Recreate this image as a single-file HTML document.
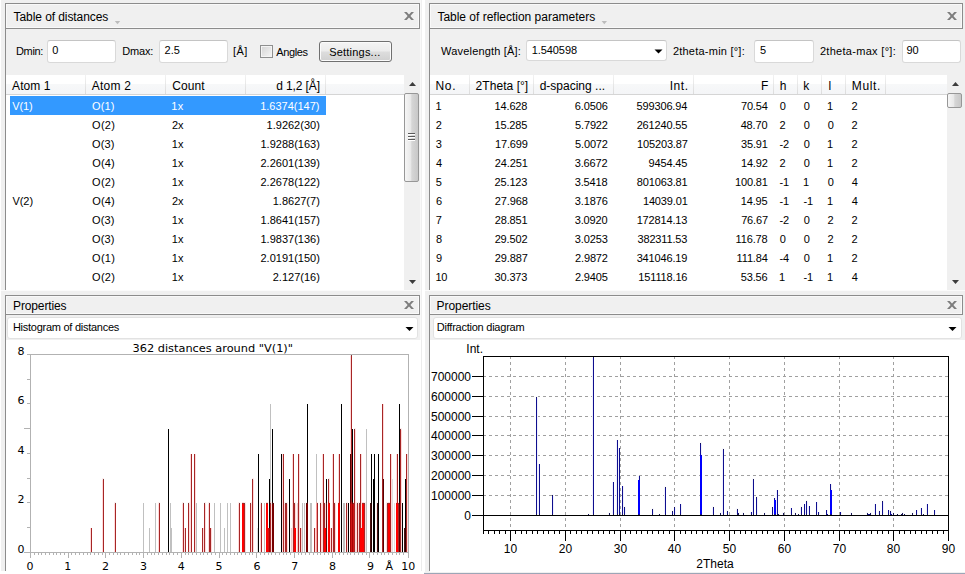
<!DOCTYPE html>
<html><head><meta charset="utf-8"><title>Distances and reflections</title>
<style>
html,body{margin:0;padding:0}
body{width:965px;height:574px;background:#f0f0f0;position:relative;overflow:hidden;font-family:"Liberation Sans",sans-serif}
.a{position:absolute;box-sizing:border-box}
.t{position:absolute;white-space:pre;}
.hd{border:1px solid #8c8c8c;background:#f0f0f0;box-shadow:inset 0 0 0 1px #f9f9f9}
.vb{background:#8c8c8c;width:1px}
.wh{background:#fff}
.inp{background:#fff;border:1px solid #d9d9d9;border-top-color:#c4c4c4;border-radius:3px}
.cmb{background:#fff;border:1px solid #e2e2e2;border-radius:3px}
.th{background:linear-gradient(#fff 0,#fff 45%,#f7f8f9 50%,#f4f5f7 100%);border-bottom:1px solid #d5d5d5}
.sep{width:1px;background:linear-gradient(#f2f2f2,#dcdcdc)}
.sbt{background:linear-gradient(90deg,#f6f6f6 0,#e8e8e8 45%,#d6d6d6 52%,#c8c8c8 100%);border:1px solid #979797;border-radius:2px}
.btn{border:1px solid #707070;border-radius:3px;background:linear-gradient(#f4f4f4 0,#ececec 48%,#dddddd 52%,#d0d0d0 100%);box-shadow:inset 0 0 0 1px #fbfbfb}
</style></head><body>
<div class="a wh" style="left:0px;top:0px;width:1px;height:574px;"></div>
<div class="a wh" style="left:0px;top:571px;width:424px;height:3px;"></div>
<div class="a " style="left:424px;top:572.6px;width:541px;height:1.4px;background:#9ca6b7"></div>
<div class="a wh" style="left:422px;top:0px;width:3px;height:572px;"></div>
<div class="a " style="left:420px;top:0px;width:1px;height:571px;background:#f9f9f9"></div>
<div class="a " style="left:1px;top:290px;width:420px;height:1px;background:#fbfbfb"></div>
<div class="a " style="left:425px;top:290px;width:540px;height:1px;background:#fbfbfb"></div>
<div class="a hd" style="left:5px;top:3px;width:415px;height:26px;"></div>
<div class="a vb" style="left:5px;top:28px;width:1px;height:262px;"></div>
<div class="a wh" style="left:6px;top:75px;width:398px;height:215px;"></div>
<div class="a th" style="left:6px;top:75px;width:398px;height:20px;"></div>
<div class="a sep" style="left:85px;top:75px;width:1px;height:19px;"></div>
<div class="a sep" style="left:165px;top:75px;width:1px;height:19px;"></div>
<div class="a sep" style="left:245px;top:75px;width:1px;height:19px;"></div>
<div class="a sep" style="left:325px;top:75px;width:1px;height:19px;"></div>
<div class="a " style="left:10px;top:96px;width:316px;height:19px;background:#3399ff"></div>
<div class="a " style="left:404px;top:75px;width:16px;height:215px;background:#f0f0f0"></div>
<div class="a sbt" style="left:404px;top:93px;width:15px;height:89px;"></div>
<div class="a hd" style="left:429px;top:3px;width:534px;height:26px;"></div>
<div class="a vb" style="left:429px;top:28px;width:1px;height:262px;"></div>
<div class="a wh" style="left:430px;top:75px;width:517px;height:215px;"></div>
<div class="a th" style="left:430px;top:75px;width:517px;height:20px;"></div>
<div class="a sep" style="left:469px;top:75px;width:1px;height:19px;"></div>
<div class="a sep" style="left:533px;top:75px;width:1px;height:19px;"></div>
<div class="a sep" style="left:613px;top:75px;width:1px;height:19px;"></div>
<div class="a sep" style="left:693px;top:75px;width:1px;height:19px;"></div>
<div class="a sep" style="left:773px;top:75px;width:1px;height:19px;"></div>
<div class="a sep" style="left:797px;top:75px;width:1px;height:19px;"></div>
<div class="a sep" style="left:821px;top:75px;width:1px;height:19px;"></div>
<div class="a sep" style="left:845px;top:75px;width:1px;height:19px;"></div>
<div class="a sep" style="left:885px;top:75px;width:1px;height:19px;"></div>
<div class="a " style="left:947px;top:75px;width:16px;height:215px;background:#f0f0f0"></div>
<div class="a sbt" style="left:947px;top:93px;width:15px;height:15px;"></div>
<div class="a hd" style="left:5px;top:295px;width:415px;height:20px;"></div>
<div class="a vb" style="left:5px;top:314px;width:1px;height:257px;"></div>
<div class="a wh" style="left:6px;top:340px;width:418px;height:231px;"></div>
<div class="a cmb" style="left:7px;top:316.5px;width:411px;height:22px;"></div>
<div class="a " style="left:421px;top:340px;width:1px;height:231px;background:#ececec"></div>
<div class="a hd" style="left:429px;top:295px;width:534px;height:20px;"></div>
<div class="a vb" style="left:429px;top:314px;width:1px;height:257px;"></div>
<div class="a wh" style="left:430px;top:340px;width:535px;height:232px;"></div>
<div class="a cmb" style="left:432.5px;top:316.5px;width:529px;height:22px;"></div>
<div class="a inp" style="left:47px;top:40px;width:68.5px;height:22.5px;"></div>
<div class="a inp" style="left:159px;top:40px;width:68.5px;height:22.5px;"></div>
<div class="a inp" style="left:525.5px;top:40px;width:141px;height:21px;"></div>
<div class="a inp" style="left:754px;top:40px;width:60px;height:22.5px;"></div>
<div class="a inp" style="left:901.5px;top:40px;width:59.5px;height:22.5px;"></div>
<div class="a " style="left:260px;top:45px;width:13px;height:13px;border:1px solid #8e8f8f;background:linear-gradient(135deg,#d4d4d4,#f6f6f6);box-shadow:inset 0 0 0 1px #f4f4f4"></div>
<div class="a btn" style="left:319px;top:41px;width:73px;height:21px;"></div>
<svg class="a" style="left:0;top:0" width="965" height="574" viewBox="0 0 965 574">
<g fill="#7e7e7e"><path d="M404 12h2.7l7.3 8h-2.7z"/><path d="M414 12h-2.7l-7.3 8h2.7z"/><path d="M947 12h2.7l7.3 8h-2.7z"/><path d="M957 12h-2.7l-7.3 8h2.7z"/><path d="M404 301h2.7l7.3 8h-2.7z"/><path d="M414 301h-2.7l-7.3 8h2.7z"/><path d="M947 301h2.7l7.3 8h-2.7z"/><path d="M957 301h-2.7l-7.3 8h2.7z"/></g>
<g fill="#bcbcbc"><path d="M114.8 21h5.4l-2.7 3.2z"/><path d="M601.6 21h5.4l-2.7 3.2z"/></g>
<g fill="#000"><path d="M405.5 327h8l-4 4z"/><path d="M948.5 327h8l-4 4z"/><path d="M654.5 49.5h8l-4 4z"/></g>
<g fill="#3c3c3c"><path d="M409 86h7l-3.5-4z"/><path d="M952 86h7l-3.5-4z"/><path d="M409 280h7l-3.5 4z"/><path d="M952 280h7l-3.5 4z"/></g>
<g stroke="#5a5a5a" stroke-width="1"><path d="M408 133.5h7M408 136.5h7M408 139.5h7"/><path stroke="#fff" d="M408 134.5h7M408 137.5h7M408 140.5h7"/></g>
</svg>
<svg class="a" style="left:0;top:0" width="965" height="574" viewBox="0 0 965 574" shape-rendering="crispEdges">
<path fill="#ffd9d9" d="M90 528h1v24h-1zM102 480h1v72h-1zM114 504h1v48h-1zM158 504h1v48h-1zM182 504h1v48h-1zM184 528h1v24h-1zM189 504h1v48h-1zM190 454h1v98h-1zM195 454h1v98h-1zM203 528h1v24h-1zM205 504h1v48h-1zM208 504h1v48h-1zM211 528h1v24h-1zM238 504h1v48h-1zM242 502h2v1h-2zM245 504h1v48h-1zM251 504h1v48h-1zM253 480h1v72h-1zM260 504h1v48h-1zM266 502h2v1h-2zM271 504h1v48h-1zM282 454h1v98h-1zM284 504h1v48h-1zM287 504h1v48h-1zM292 454h1v98h-1zM295 504h1v24h-1zM299 454h1v98h-1zM301 528h1v24h-1zM315 528h1v24h-1zM321 504h1v48h-1zM322 454h1v98h-1zM325 504h1v24h-1zM329 480h1v22h-1zM330 528h1v24h-1zM332 454h1v98h-1zM335 504h1v48h-1zM338 454h1v48h-1zM347 504h1v48h-1zM350 356h1v98h-1zM355 430h1v122h-1zM356 504h1v48h-1zM358 504h1v48h-1zM361 454h1v74h-1zM362 502h2v1h-2zM365 504h1v48h-1zM383 404h1v75h-1zM386 504h1v48h-1zM388 502h2v1h-2zM391 454h1v98h-1zM396 454h1v48h-1zM401 430h1v122h-1zM407 454h1v98h-1z"/>
<path fill="#a62626" d="M91 528h1v24h-1zM103 480h1v72h-1zM115 504h1v48h-1zM159 504h1v48h-1zM183 504h1v48h-1zM185 528h1v24h-1zM188 504h1v48h-1zM191 454h1v98h-1zM194 454h1v98h-1zM202 528h1v24h-1zM204 504h1v48h-1zM209 504h1v48h-1zM210 528h1v24h-1zM239 504h1v48h-1zM242 503h2v1h-2zM244 504h1v48h-1zM250 504h1v48h-1zM252 480h1v72h-1zM261 504h1v48h-1zM266 503h2v1h-2zM270 504h1v48h-1zM283 454h1v98h-1zM285 504h2v48h-2zM293 454h1v98h-1zM294 504h1v24h-1zM298 454h1v98h-1zM300 528h1v24h-1zM314 528h1v24h-1zM317 504h1v48h-1zM320 504h1v48h-1zM323 454h1v98h-1zM324 504h1v24h-1zM328 480h1v22h-1zM331 528h1v24h-1zM333 454h1v98h-1zM334 504h1v48h-1zM339 454h1v48h-1zM346 504h1v48h-1zM351 356h1v146h-1zM354 430h1v122h-1zM357 504h1v48h-1zM359 504h1v48h-1zM360 454h1v74h-1zM362 503h2v1h-2zM364 504h1v48h-1zM382 404h1v148h-1zM387 504h1v48h-1zM388 503h2v1h-2zM390 454h1v98h-1zM397 454h1v48h-1zM398 504h1v48h-1zM400 430h1v122h-1zM406 454h1v98h-1z"/>
<path fill="#ffecec" d="M102 478h1v2h-1zM103 478h1v1h-1zM114 502h1v2h-1zM115 502h1v1h-1zM158 502h1v2h-1zM159 502h1v1h-1zM182 502h1v2h-1zM183 502h1v1h-1zM188 502h1v1h-1zM189 502h1v2h-1zM204 502h1v1h-1zM205 502h1v2h-1zM208 502h1v2h-1zM209 502h1v1h-1zM238 502h1v2h-1zM239 502h1v1h-1zM244 502h1v1h-1zM245 502h1v2h-1zM250 502h1v1h-1zM251 502h1v2h-1zM252 478h1v1h-1zM253 478h1v2h-1zM260 502h1v2h-1zM261 502h1v1h-1zM271 502h1v2h-1zM284 502h1v2h-1zM285 502h2v1h-2zM287 502h1v2h-1zM294 502h1v1h-1zM295 502h1v2h-1zM317 502h1v1h-1zM320 502h1v1h-1zM321 502h1v2h-1zM324 502h1v1h-1zM325 502h1v2h-1zM328 478h1v1h-1zM329 478h1v2h-1zM334 502h1v1h-1zM335 502h1v2h-1zM346 502h1v1h-1zM347 502h1v2h-1zM350 354h1v2h-1zM351 354h1v1h-1zM354 428h1v1h-1zM355 428h1v2h-1zM356 502h1v2h-1zM357 502h1v1h-1zM358 502h1v2h-1zM359 502h1v1h-1zM364 502h1v1h-1zM365 502h1v2h-1zM386 502h1v2h-1zM387 502h1v1h-1zM398 502h1v1h-1zM400 428h1v1h-1zM401 428h1v2h-1z"/>
<path fill="#793939" d="M103 479h1v1h-1zM115 503h1v1h-1zM159 503h1v1h-1zM183 503h1v1h-1zM188 503h1v1h-1zM204 503h1v1h-1zM209 503h1v1h-1zM239 503h1v1h-1zM244 503h1v1h-1zM250 503h1v1h-1zM252 479h1v1h-1zM261 503h1v1h-1zM270 503h1v1h-1zM285 503h2v1h-2zM294 503h1v1h-1zM317 503h1v1h-1zM320 503h1v1h-1zM324 503h1v1h-1zM328 479h1v1h-1zM334 503h1v1h-1zM346 503h1v1h-1zM351 355h1v1h-1zM354 429h1v1h-1zM357 503h1v1h-1zM359 503h1v1h-1zM364 503h1v1h-1zM387 503h1v1h-1zM398 503h1v1h-1zM400 429h1v1h-1z"/>
<path fill="#c0c0c0" d="M143 503h1v49h-1zM149 528h1v24h-1zM155 503h1v49h-1zM170 503h1v49h-1zM171 528h1v24h-1zM196 503h1v49h-1zM214 503h1v49h-1zM220 503h1v49h-1zM224 528h1v24h-1zM227 503h1v49h-1zM230 503h1v49h-1zM264 503h1v49h-1zM270 404h1v98h-1zM302 503h1v49h-1zM304 503h1v49h-1zM310 503h2v49h-2zM316 454h1v48h-1zM343 503h2v49h-2zM366 429h1v123h-1z"/>
<path fill="#000000" d="M168 429h1v123h-1zM258 454h1v98h-1zM269 479h1v49h-1zM272 429h1v73h-1zM281 454h1v98h-1zM289 479h1v73h-1zM307 404h1v98h-1zM326 479h1v23h-1zM341 404h1v148h-1zM348 503h1v49h-1zM352 429h1v73h-1zM371 454h1v48h-1zM373 479h1v73h-1zM374 454h1v98h-1zM378 454h1v98h-1zM399 404h1v98h-1zM402 503h1v49h-1zM405 479h1v49h-1z"/>
<path fill="#ff0000" d="M242 504h2v48h-2zM266 504h2v48h-2zM294 528h2v24h-2zM324 528h2v24h-2zM328 504h2v48h-2zM338 504h2v48h-2zM360 528h2v24h-2zM362 504h2v48h-2zM388 504h2v48h-2zM396 504h2v48h-2z"/>
<path fill="#e0e0e0" d="M257 528h1v24h-1zM392 479h1v73h-1zM394 503h1v49h-1z"/>
<path fill="#d01414" d="M268 528h1v24h-1zM351 504h1v48h-1zM353 504h1v48h-1z"/>
<path fill="#a70000" d="M269 528h1v24h-1zM350 504h1v48h-1zM352 504h1v48h-1z"/>
<path fill="#edadad" d="M270 502h1v1h-1zM316 502h1v2h-1z"/>
<path fill="#2a0000" d="M272 502h1v1h-1zM307 502h1v1h-1zM371 504h1v48h-1zM405 528h1v24h-1z"/>
<path fill="#4e1212" d="M272 503h2v1h-2zM306 503h2v1h-2zM326 504h1v48h-1zM370 504h1v48h-1zM377 504h1v48h-1zM404 528h1v24h-1z"/>
<path fill="#780000" d="M272 504h2v48h-2zM306 504h2v48h-2z"/>
<path fill="#ffeded" d="M273 502h1v1h-1zM306 502h1v1h-1zM327 504h1v48h-1zM376 504h1v48h-1z"/>
<path fill="#fff6f6" d="M290 528h1v24h-1zM296 504h1v48h-1zM327 502h1v2h-1zM370 502h1v1h-1zM376 502h1v2h-1zM377 502h1v1h-1z"/>
<path fill="#eacdcd" d="M291 528h1v24h-1zM297 504h1v48h-1z"/>
<path fill="#e0d1d1" d="M297 503h1v1h-1z"/>
<path fill="#ff9a9a" d="M316 504h1v48h-1z"/>
<path fill="#150000" d="M326 502h1v1h-1zM371 502h1v2h-1z"/>
<path fill="#391b1b" d="M326 503h1v1h-1zM370 503h1v1h-1zM377 503h1v1h-1z"/>
<path fill="#d21313" d="M328 502h1v2h-1zM329 503h1v1h-1zM338 503h1v1h-1zM339 502h1v2h-1zM396 503h1v1h-1zM397 502h1v2h-1z"/>
<path fill="#ffc6c6" d="M329 502h1v1h-1zM338 502h1v1h-1zM396 502h1v1h-1z"/>
<path fill="#590000" d="M350 454h1v48h-1zM383 479h1v73h-1zM399 504h1v48h-1z"/>
<path fill="#6e0000" d="M350 502h1v1h-1z"/>
<path fill="#920000" d="M350 503h1v1h-1z"/>
<path fill="#bb1d1d" d="M351 502h1v2h-1z"/>
<path fill="#420000" d="M352 502h1v1h-1z"/>
<path fill="#660808" d="M352 503h1v1h-1z"/>
<path fill="#ffe3e3" d="M353 502h1v1h-1z"/>
<path fill="#8e3030" d="M353 503h1v1h-1z"/>
<path fill="#2d0000" d="M399 502h1v2h-1z"/>
<path fill="#b2b2b2" d="M30 354h379v1h-379zM408 354h1v204h-1zM30 354h1v204h-1zM24 552h385v1h-385zM27 527h3v1h-3zM27 502h3v1h-3zM27 478h3v1h-3zM27 453h3v1h-3zM24 428h6v1h-6zM27 403h3v1h-3zM27 379h3v1h-3zM27 354h3v1h-3zM34 553h1v2h-1zM38 553h1v2h-1zM41 553h1v2h-1zM45 553h1v2h-1zM49 553h1v2h-1zM53 553h1v2h-1zM56 553h1v2h-1zM60 553h1v2h-1zM64 553h1v2h-1zM68 553h1v5h-1zM71 553h1v2h-1zM75 553h1v2h-1zM79 553h1v2h-1zM83 553h1v2h-1zM87 553h1v2h-1zM90 553h1v2h-1zM94 553h1v2h-1zM98 553h1v2h-1zM102 553h1v2h-1zM105 553h1v5h-1zM109 553h1v2h-1zM113 553h1v2h-1zM117 553h1v2h-1zM120 553h1v2h-1zM124 553h1v2h-1zM128 553h1v2h-1zM132 553h1v2h-1zM136 553h1v2h-1zM139 553h1v2h-1zM143 553h1v5h-1zM147 553h1v2h-1zM151 553h1v2h-1zM154 553h1v2h-1zM158 553h1v2h-1zM162 553h1v2h-1zM166 553h1v2h-1zM169 553h1v2h-1zM173 553h1v2h-1zM177 553h1v2h-1zM181 553h1v5h-1zM185 553h1v2h-1zM188 553h1v2h-1zM192 553h1v2h-1zM196 553h1v2h-1zM200 553h1v2h-1zM203 553h1v2h-1zM207 553h1v2h-1zM211 553h1v2h-1zM215 553h1v2h-1zM219 553h1v5h-1zM222 553h1v2h-1zM226 553h1v2h-1zM230 553h1v2h-1zM234 553h1v2h-1zM237 553h1v2h-1zM241 553h1v2h-1zM245 553h1v2h-1zM249 553h1v2h-1zM252 553h1v2h-1zM256 553h1v5h-1zM260 553h1v2h-1zM264 553h1v2h-1zM268 553h1v2h-1zM271 553h1v2h-1zM275 553h1v2h-1zM279 553h1v2h-1zM283 553h1v2h-1zM286 553h1v2h-1zM290 553h1v2h-1zM294 553h1v5h-1zM298 553h1v2h-1zM301 553h1v2h-1zM305 553h1v2h-1zM309 553h1v2h-1zM313 553h1v2h-1zM317 553h1v2h-1zM320 553h1v2h-1zM324 553h1v2h-1zM328 553h1v2h-1zM332 553h1v5h-1zM335 553h1v2h-1zM339 553h1v2h-1zM343 553h1v2h-1zM347 553h1v2h-1zM350 553h1v2h-1zM354 553h1v2h-1zM358 553h1v2h-1zM362 553h1v2h-1zM366 553h1v2h-1zM369 553h1v5h-1zM373 553h1v2h-1zM377 553h1v2h-1zM381 553h1v2h-1zM384 553h1v2h-1zM388 553h1v2h-1zM392 553h1v2h-1zM396 553h1v2h-1zM399 553h1v2h-1zM403 553h1v2h-1z"/>
</svg>
<svg class="a" style="left:0;top:0" width="965" height="574" viewBox="0 0 965 574"><g font-family='"DejaVu Sans","Liberation Sans",sans-serif' font-size="11" fill="#000">
<text x="24.4" y="552.6" text-anchor="end">0</text>
<text x="24.4" y="502.6" text-anchor="end">2</text>
<text x="24.4" y="453.6" text-anchor="end">4</text>
<text x="24.4" y="403.6" text-anchor="end">6</text>
<text x="24.4" y="354.6" text-anchor="end">8</text>
<text x="29.9" y="569.5" text-anchor="middle">0</text>
<text x="67.7" y="569.5" text-anchor="middle">1</text>
<text x="105.6" y="569.5" text-anchor="middle">2</text>
<text x="143.4" y="569.5" text-anchor="middle">3</text>
<text x="181.2" y="569.5" text-anchor="middle">4</text>
<text x="219.0" y="569.5" text-anchor="middle">5</text>
<text x="256.9" y="569.5" text-anchor="middle">6</text>
<text x="294.7" y="569.5" text-anchor="middle">7</text>
<text x="332.5" y="569.5" text-anchor="middle">8</text>
<text x="370.4" y="569.5" text-anchor="middle">9</text>
<text x="408.2" y="569.5" text-anchor="middle">10</text>
<text x="389.3" y="569.5" text-anchor="middle">Å</text>
<text x="132.5" y="351.5" textLength="160.5" lengthAdjust="spacingAndGlyphs">362 distances around "V(1)"</text>
</g></svg>
<svg class="a" style="left:0;top:0" width="965" height="574" viewBox="0 0 965 574" shape-rendering="crispEdges">
<path d="M510.5 356V530M565.5 356V530M620.5 356V530M674.5 356V530M729.5 356V530M784.5 356V530M839.5 356V530M893.5 356V530M483 495.5H948M483 475.5H948M483 455.5H948M483 435.5H948M483 416.5H948M483 396.5H948M483 376.5H948" stroke="#a0a0a0" stroke-width="1" stroke-dasharray="3 3" fill="none"/>
<path fill="#f8f8ff" d="M536 396h1v1h-1zM537 396h1v2h-1zM537 514h2v1h-2zM552 494h1v1h-1zM553 494h1v2h-1zM553 514h1v1h-1zM589 514h1v1h-1zM592 357h1v1h-1zM592 514h1v1h-1zM608 512h1v3h-1zM609 512h1v1h-1zM612 514h1v1h-1zM616 514h1v1h-1zM618 514h1v1h-1zM623 514h1v1h-1zM624 506h1v1h-1zM625 506h1v2h-1zM625 514h1v1h-1zM652 508h1v1h-1zM653 508h1v2h-1zM653 514h1v1h-1zM658 514h1v1h-1zM664 486h1v2h-1zM664 514h1v1h-1zM665 486h1v1h-1zM672 510h1v1h-1zM673 510h1v2h-1zM673 514h1v1h-1zM674 506h1v1h-1zM675 506h1v2h-1zM675 514h1v1h-1zM681 514h1v1h-1zM700 442h1v1h-1zM701 442h1v2h-1zM712 506h1v2h-1zM712 514h1v1h-1zM713 506h1v1h-1zM720 512h1v1h-1zM721 512h1v3h-1zM722 448h1v2h-1zM722 514h1v1h-1zM723 448h1v1h-1zM726 510h1v2h-1zM726 514h1v1h-1zM727 510h1v1h-1zM736 508h1v2h-1zM736 514h1v1h-1zM737 508h1v1h-1zM738 512h1v1h-1zM739 512h1v3h-1zM742 512h1v3h-1zM743 512h1v1h-1zM750 514h1v1h-1zM752 478h1v2h-1zM752 514h1v1h-1zM753 478h1v1h-1zM756 496h1v1h-1zM757 496h1v2h-1zM757 514h1v1h-1zM764 512h1v1h-1zM765 512h1v3h-1zM772 506h1v1h-1zM773 506h1v2h-1zM773 514h1v1h-1zM776 514h1v1h-1zM779 514h1v1h-1zM782 512h1v3h-1zM783 512h1v1h-1zM790 514h1v1h-1zM794 512h1v3h-1zM795 512h1v1h-1zM799 514h2v1h-2zM800 506h1v2h-1zM801 506h1v1h-1zM805 514h1v1h-1zM806 500h1v1h-1zM807 500h1v2h-1zM807 514h2v1h-2zM817 514h1v1h-1zM819 514h1v1h-1zM841 514h1v1h-1zM850 512h1v3h-1zM851 512h1v1h-1zM866 512h1v3h-1zM867 512h1v1h-1zM870 512h1v1h-1zM871 512h1v3h-1zM874 514h1v1h-1zM878 510h1v2h-1zM878 514h1v1h-1zM879 510h1v1h-1zM882 500h1v1h-1zM883 500h1v2h-1zM883 514h1v1h-1zM889 514h1v1h-1zM890 510h1v1h-1zM891 510h1v2h-1zM892 512h1v3h-1zM893 512h1v1h-1zM896 514h1v1h-1zM900 514h1v1h-1zM902 512h1v1h-1zM903 512h1v3h-1zM905 514h1v1h-1zM912 512h1v1h-1zM913 512h1v3h-1zM917 514h1v1h-1zM920 514h1v1h-1zM922 514h1v1h-1zM926 514h1v1h-1zM935 514h1v1h-1z"/>
<path fill="#161656" d="M536 397h1v1h-1zM536 514h1v1h-1zM539 514h1v1h-1zM552 495h1v1h-1zM552 514h1v1h-1zM588 514h1v1h-1zM593 357h1v1h-1zM593 514h1v1h-1zM609 513h1v2h-1zM613 514h1v1h-1zM617 514h1v1h-1zM619 514h1v1h-1zM622 514h1v1h-1zM624 507h1v1h-1zM624 514h1v1h-1zM652 509h1v1h-1zM652 514h1v1h-1zM659 514h1v1h-1zM665 487h1v1h-1zM665 514h1v1h-1zM672 511h1v1h-1zM672 514h1v1h-1zM674 507h1v1h-1zM674 514h1v1h-1zM680 514h1v1h-1zM700 443h1v1h-1zM713 507h1v1h-1zM713 514h1v1h-1zM720 513h1v2h-1zM723 449h1v1h-1zM723 514h1v1h-1zM727 511h1v1h-1zM727 514h1v1h-1zM737 509h1v1h-1zM737 514h1v1h-1zM738 513h1v2h-1zM743 513h1v2h-1zM751 514h1v1h-1zM753 479h1v1h-1zM753 514h1v1h-1zM756 497h1v1h-1zM756 514h1v1h-1zM764 513h1v2h-1zM772 507h1v1h-1zM772 514h1v1h-1zM777 514h2v1h-2zM783 513h1v2h-1zM791 514h1v1h-1zM795 513h1v2h-1zM798 514h1v1h-1zM801 507h1v1h-1zM801 514h1v1h-1zM804 514h1v1h-1zM806 501h1v1h-1zM806 514h1v1h-1zM809 514h1v1h-1zM816 514h1v1h-1zM818 514h1v1h-1zM840 514h1v1h-1zM851 513h1v2h-1zM867 513h1v2h-1zM870 513h1v2h-1zM875 514h1v1h-1zM879 511h1v1h-1zM879 514h1v1h-1zM882 501h1v1h-1zM882 514h1v1h-1zM888 514h1v1h-1zM890 511h1v1h-1zM893 513h1v2h-1zM897 514h1v1h-1zM901 514h1v1h-1zM902 513h1v2h-1zM904 514h1v1h-1zM912 513h1v2h-1zM916 514h1v1h-1zM921 514h1v1h-1zM923 514h1v1h-1zM927 514h1v1h-1zM934 514h1v1h-1z"/>
<path fill="#0f0f8e" d="M536 398h1v116h-1zM539 464h1v50h-1zM552 496h1v18h-1zM593 358h1v156h-1zM613 482h1v32h-1zM617 440h1v74h-1zM619 448h1v66h-1zM622 486h1v28h-1zM624 508h1v6h-1zM638 514h2v1h-2zM639 476h1v4h-1zM652 510h1v4h-1zM665 488h1v26h-1zM672 512h1v2h-1zM674 508h1v6h-1zM680 504h1v10h-1zM700 444h1v10h-1zM700 514h2v1h-2zM713 508h1v6h-1zM723 450h1v64h-1zM727 512h1v2h-1zM737 510h1v4h-1zM751 512h1v2h-1zM753 480h1v34h-1zM756 498h1v16h-1zM772 508h1v6h-1zM774 498h1v2h-1zM774 514h2v1h-2zM777 490h1v24h-1zM791 508h1v6h-1zM801 508h1v6h-1zM804 504h1v10h-1zM806 502h1v12h-1zM809 506h1v8h-1zM816 502h1v12h-1zM818 512h1v2h-1zM826 510h1v5h-1zM827 514h1v1h-1zM830 484h1v6h-1zM830 514h2v1h-2zM840 512h1v2h-1zM868 514h2v1h-2zM875 504h1v10h-1zM879 512h1v2h-1zM882 502h1v12h-1zM888 510h1v4h-1zM890 512h1v3h-1zM891 514h1v1h-1zM916 510h1v4h-1zM921 508h1v6h-1zM927 504h1v10h-1zM934 510h1v4h-1z"/>
<path fill="#f0f0ff" d="M537 398h1v116h-1zM538 464h1v50h-1zM553 496h1v18h-1zM592 358h1v156h-1zM612 482h1v32h-1zM616 440h1v74h-1zM618 448h1v66h-1zM623 486h1v28h-1zM625 508h1v6h-1zM638 476h1v4h-1zM653 510h1v4h-1zM664 488h1v26h-1zM673 512h1v2h-1zM675 508h1v6h-1zM681 504h1v10h-1zM701 444h1v10h-1zM712 508h1v6h-1zM722 450h1v64h-1zM726 512h1v2h-1zM736 510h1v4h-1zM750 512h1v2h-1zM752 480h1v34h-1zM757 498h1v16h-1zM773 508h1v6h-1zM775 498h1v2h-1zM776 490h1v24h-1zM790 508h1v6h-1zM800 508h1v6h-1zM805 504h1v10h-1zM807 502h1v12h-1zM808 506h1v8h-1zM817 502h1v12h-1zM819 512h1v2h-1zM827 510h1v4h-1zM831 484h1v6h-1zM841 512h1v2h-1zM874 504h1v10h-1zM878 512h1v2h-1zM883 502h1v12h-1zM889 510h1v4h-1zM891 512h1v2h-1zM917 510h1v4h-1zM920 508h1v6h-1zM926 504h1v10h-1zM935 510h1v4h-1z"/>
<path fill="#0000ff" d="M638 480h2v34h-2zM700 456h2v58h-2zM774 500h2v14h-2zM830 490h2v24h-2z"/>
<path fill="#0707c7" d="M700 454h1v2h-1zM701 455h1v1h-1z"/>
<path fill="#e9e9ff" d="M701 454h1v1h-1z"/>
<path fill="#000" d="M483 356h466v1h-466zM483 356h1v175h-1zM948 356h1v175h-1zM483 530h466v1h-466zM472 515h477v1h-477zM472 495h11v1h-11zM472 475h11v1h-11zM472 455h11v1h-11zM472 435h11v1h-11zM472 416h11v1h-11zM472 396h11v1h-11zM472 376h11v1h-11zM483 531h1v3h-1zM488 531h1v3h-1zM494 531h1v3h-1zM499 531h1v3h-1zM505 531h1v3h-1zM510 531h1v10h-1zM515 531h1v3h-1zM521 531h1v3h-1zM526 531h1v3h-1zM532 531h1v3h-1zM537 531h1v3h-1zM543 531h1v3h-1zM548 531h1v3h-1zM554 531h1v3h-1zM559 531h1v3h-1zM565 531h1v10h-1zM570 531h1v3h-1zM576 531h1v3h-1zM581 531h1v3h-1zM587 531h1v3h-1zM592 531h1v3h-1zM598 531h1v3h-1zM603 531h1v3h-1zM609 531h1v3h-1zM614 531h1v3h-1zM620 531h1v10h-1zM625 531h1v3h-1zM630 531h1v3h-1zM636 531h1v3h-1zM641 531h1v3h-1zM647 531h1v3h-1zM652 531h1v3h-1zM658 531h1v3h-1zM663 531h1v3h-1zM669 531h1v3h-1zM674 531h1v10h-1zM680 531h1v3h-1zM685 531h1v3h-1zM691 531h1v3h-1zM696 531h1v3h-1zM702 531h1v3h-1zM707 531h1v3h-1zM713 531h1v3h-1zM718 531h1v3h-1zM724 531h1v3h-1zM729 531h1v10h-1zM734 531h1v3h-1zM740 531h1v3h-1zM745 531h1v3h-1zM751 531h1v3h-1zM756 531h1v3h-1zM762 531h1v3h-1zM767 531h1v3h-1zM773 531h1v3h-1zM778 531h1v3h-1zM784 531h1v10h-1zM789 531h1v3h-1zM795 531h1v3h-1zM800 531h1v3h-1zM806 531h1v3h-1zM811 531h1v3h-1zM817 531h1v3h-1zM822 531h1v3h-1zM828 531h1v3h-1zM833 531h1v3h-1zM839 531h1v10h-1zM844 531h1v3h-1zM849 531h1v3h-1zM855 531h1v3h-1zM860 531h1v3h-1zM866 531h1v3h-1zM871 531h1v3h-1zM877 531h1v3h-1zM882 531h1v3h-1zM888 531h1v3h-1zM893 531h1v10h-1zM899 531h1v3h-1zM904 531h1v3h-1zM910 531h1v3h-1zM915 531h1v3h-1zM921 531h1v3h-1zM926 531h1v3h-1zM932 531h1v3h-1zM937 531h1v3h-1zM943 531h1v3h-1zM948 531h1v10h-1z"/>
</svg>
<svg class="a" style="left:0;top:0" width="965" height="574" viewBox="0 0 965 574"><g font-family='"Liberation Sans",sans-serif' font-size="12" fill="#000">
<text x="471" y="519.8" text-anchor="end">0</text>
<text x="471" y="499.8" text-anchor="end">100000</text>
<text x="471" y="479.8" text-anchor="end">200000</text>
<text x="471" y="459.8" text-anchor="end">300000</text>
<text x="471" y="439.8" text-anchor="end">400000</text>
<text x="471" y="420.8" text-anchor="end">500000</text>
<text x="471" y="400.8" text-anchor="end">600000</text>
<text x="471" y="380.8" text-anchor="end">700000</text>
<text x="510.4" y="552.8" text-anchor="middle">10</text>
<text x="565.4" y="552.8" text-anchor="middle">20</text>
<text x="620.4" y="552.8" text-anchor="middle">30</text>
<text x="674.4" y="552.8" text-anchor="middle">40</text>
<text x="729.4" y="552.8" text-anchor="middle">50</text>
<text x="784.4" y="552.8" text-anchor="middle">60</text>
<text x="839.4" y="552.8" text-anchor="middle">70</text>
<text x="893.4" y="552.8" text-anchor="middle">80</text>
<text x="948.4" y="552.8" text-anchor="middle">90</text>
<text x="715" y="568" text-anchor="middle">2Theta</text>
<text x="483" y="353" text-anchor="end">Int.</text>
</g></svg>
<span class="t" id="t0" style="font:12px/16px 'Liberation Sans',sans-serif;color:#000;top:8.8px;letter-spacing:-0.08px;left:13.6px;">Table of distances</span>
<span class="t" id="t1" style="font:12px/16px 'Liberation Sans',sans-serif;color:#000;top:8.8px;letter-spacing:-0.01px;left:437.4px;">Table of reflection parameters</span>
<span class="t" id="t2" style="font:12px/16px 'Liberation Sans',sans-serif;color:#000;top:298.1px;letter-spacing:-0.12px;left:13.0px;">Properties</span>
<span class="t" id="t3" style="font:12px/16px 'Liberation Sans',sans-serif;color:#000;top:298.1px;letter-spacing:-0.05px;left:436.5px;">Properties</span>
<span class="t" id="t4" style="font:11px/16px 'Liberation Sans',sans-serif;color:#000;top:43.0px;letter-spacing:-0.36px;left:16.0px;">Dmin:</span>
<span class="t" id="t5" style="font:11px/16px 'Liberation Sans',sans-serif;color:#000;top:42.2px;left:52.3px;">0</span>
<span class="t" id="t6" style="font:11px/16px 'Liberation Sans',sans-serif;color:#000;top:43.0px;letter-spacing:-0.16px;left:122.2px;">Dmax:</span>
<span class="t" id="t7" style="font:11px/16px 'Liberation Sans',sans-serif;color:#000;top:42.2px;left:164.6px;">2.5</span>
<span class="t" id="t8" style="font:11px/16px 'Liberation Sans',sans-serif;color:#000;top:43.0px;letter-spacing:0.39px;left:233.1px;">[Å]</span>
<span class="t" id="t9" style="font:11px/16px 'Liberation Sans',sans-serif;color:#000;top:44.1px;letter-spacing:-0.41px;left:276.3px;">Angles</span>
<span class="t" id="t10" style="font:11px/16px 'Liberation Sans',sans-serif;color:#000;top:44.1px;letter-spacing:0.21px;left:329.2px;">Settings...</span>
<span class="t" id="t11" style="font:11px/16px 'Liberation Sans',sans-serif;color:#000;top:43.0px;letter-spacing:0.18px;left:441.1px;">Wavelength [Å]:</span>
<span class="t" id="t12" style="font:11px/16px 'Liberation Sans',sans-serif;color:#000;top:42.2px;letter-spacing:-0.07px;left:531.7px;">1.540598</span>
<span class="t" id="t13" style="font:11px/16px 'Liberation Sans',sans-serif;color:#000;top:43.0px;letter-spacing:0.23px;left:672.9px;">2theta-min [°]:</span>
<span class="t" id="t14" style="font:11px/16px 'Liberation Sans',sans-serif;color:#000;top:42.2px;left:760.1px;">5</span>
<span class="t" id="t15" style="font:11px/16px 'Liberation Sans',sans-serif;color:#000;top:43.0px;letter-spacing:0.30px;left:819.9px;">2theta-max [°]:</span>
<span class="t" id="t16" style="font:11px/16px 'Liberation Sans',sans-serif;color:#000;top:42.2px;left:906.5px;">90</span>
<span class="t" id="t17" style="font:11px/16px 'Liberation Sans',sans-serif;color:#000;top:318.9px;letter-spacing:-0.26px;left:12.9px;">Histogram of distances</span>
<span class="t" id="t18" style="font:11px/16px 'Liberation Sans',sans-serif;color:#000;top:318.9px;letter-spacing:-0.24px;left:436.8px;">Diffraction diagram</span>
<span class="t" id="t19" style="font:12px/16px 'Liberation Sans',sans-serif;color:#000;top:78.1px;letter-spacing:0.08px;left:12.1px;">Atom 1</span>
<span class="t" id="t20" style="font:12px/16px 'Liberation Sans',sans-serif;color:#000;top:78.1px;letter-spacing:0.24px;left:91.8px;">Atom 2</span>
<span class="t" id="t21" style="font:12px/16px 'Liberation Sans',sans-serif;color:#000;top:78.1px;letter-spacing:0.08px;left:172.2px;">Count</span>
<span class="t" id="t22" style="font:12px/16px 'Liberation Sans',sans-serif;color:#000;top:78.1px;letter-spacing:-0.11px;left:276.2px;">d 1,2 [Å]</span>
<span class="t" id="t23" style="font:11px/16px 'Liberation Sans',sans-serif;color:#fff;top:98.1px;letter-spacing:-0.10px;left:12.3px;">V(1)</span>
<span class="t" id="t24" style="font:11px/16px 'Liberation Sans',sans-serif;color:#fff;top:98.1px;letter-spacing:0.14px;left:92.0px;">O(1)</span>
<span class="t" id="t25" style="font:11px/16px 'Liberation Sans',sans-serif;color:#fff;top:98.1px;letter-spacing:0.37px;left:171.2px;">1x</span>
<span class="t" id="t26" style="font:11px/16px 'Liberation Sans',sans-serif;color:#fff;top:98.1px;right:645.5px;">1.6374(147)</span>
<span class="t" id="t27" style="font:11px/16px 'Liberation Sans',sans-serif;color:#000;top:117.1px;letter-spacing:0.25px;left:92.1px;">O(2)</span>
<span class="t" id="t28" style="font:11px/16px 'Liberation Sans',sans-serif;color:#000;top:117.1px;letter-spacing:-0.28px;left:172.1px;">2x</span>
<span class="t" id="t29" style="font:11px/16px 'Liberation Sans',sans-serif;color:#000;top:117.1px;right:645.2px;">1.9262(30)</span>
<span class="t" id="t30" style="font:11px/16px 'Liberation Sans',sans-serif;color:#000;top:136.1px;letter-spacing:0.14px;left:92.1px;">O(3)</span>
<span class="t" id="t31" style="font:11px/16px 'Liberation Sans',sans-serif;color:#000;top:136.1px;letter-spacing:0.20px;left:171.7px;">1x</span>
<span class="t" id="t32" style="font:11px/16px 'Liberation Sans',sans-serif;color:#000;top:136.1px;right:645.2px;">1.9288(163)</span>
<span class="t" id="t33" style="font:11px/16px 'Liberation Sans',sans-serif;color:#000;top:155.1px;letter-spacing:0.16px;left:92.2px;">O(4)</span>
<span class="t" id="t34" style="font:11px/16px 'Liberation Sans',sans-serif;color:#000;top:155.1px;letter-spacing:0.20px;left:171.7px;">1x</span>
<span class="t" id="t35" style="font:11px/16px 'Liberation Sans',sans-serif;color:#000;top:155.1px;right:645.2px;">2.2601(139)</span>
<span class="t" id="t36" style="font:11px/16px 'Liberation Sans',sans-serif;color:#000;top:174.1px;letter-spacing:0.25px;left:92.1px;">O(2)</span>
<span class="t" id="t37" style="font:11px/16px 'Liberation Sans',sans-serif;color:#000;top:174.1px;letter-spacing:0.20px;left:171.7px;">1x</span>
<span class="t" id="t38" style="font:11px/16px 'Liberation Sans',sans-serif;color:#000;top:174.1px;right:645.2px;">2.2678(122)</span>
<span class="t" id="t39" style="font:11px/16px 'Liberation Sans',sans-serif;color:#000;top:193.1px;letter-spacing:-0.07px;left:12.5px;">V(2)</span>
<span class="t" id="t40" style="font:11px/16px 'Liberation Sans',sans-serif;color:#000;top:193.1px;letter-spacing:0.16px;left:92.2px;">O(4)</span>
<span class="t" id="t41" style="font:11px/16px 'Liberation Sans',sans-serif;color:#000;top:193.1px;letter-spacing:-0.28px;left:172.1px;">2x</span>
<span class="t" id="t42" style="font:11px/16px 'Liberation Sans',sans-serif;color:#000;top:193.1px;right:645.2px;">1.8627(7)</span>
<span class="t" id="t43" style="font:11px/16px 'Liberation Sans',sans-serif;color:#000;top:212.1px;letter-spacing:0.14px;left:92.1px;">O(3)</span>
<span class="t" id="t44" style="font:11px/16px 'Liberation Sans',sans-serif;color:#000;top:212.1px;letter-spacing:0.20px;left:171.7px;">1x</span>
<span class="t" id="t45" style="font:11px/16px 'Liberation Sans',sans-serif;color:#000;top:212.1px;right:645.1px;">1.8641(157)</span>
<span class="t" id="t46" style="font:11px/16px 'Liberation Sans',sans-serif;color:#000;top:231.1px;letter-spacing:0.14px;left:92.1px;">O(3)</span>
<span class="t" id="t47" style="font:11px/16px 'Liberation Sans',sans-serif;color:#000;top:231.1px;letter-spacing:0.20px;left:171.7px;">1x</span>
<span class="t" id="t48" style="font:11px/16px 'Liberation Sans',sans-serif;color:#000;top:231.1px;right:645.2px;">1.9837(136)</span>
<span class="t" id="t49" style="font:11px/16px 'Liberation Sans',sans-serif;color:#000;top:250.1px;letter-spacing:0.26px;left:92.1px;">O(1)</span>
<span class="t" id="t50" style="font:11px/16px 'Liberation Sans',sans-serif;color:#000;top:250.1px;letter-spacing:0.20px;left:171.7px;">1x</span>
<span class="t" id="t51" style="font:11px/16px 'Liberation Sans',sans-serif;color:#000;top:250.1px;right:645.2px;">2.0191(150)</span>
<span class="t" id="t52" style="font:11px/16px 'Liberation Sans',sans-serif;color:#000;top:269.1px;letter-spacing:0.25px;left:92.1px;">O(2)</span>
<span class="t" id="t53" style="font:11px/16px 'Liberation Sans',sans-serif;color:#000;top:269.1px;letter-spacing:0.20px;left:171.7px;">1x</span>
<span class="t" id="t54" style="font:11px/16px 'Liberation Sans',sans-serif;color:#000;top:269.1px;right:645.2px;">2.127(16)</span>
<span class="t" id="t55" style="font:12px/16px 'Liberation Sans',sans-serif;color:#000;top:78.1px;letter-spacing:0.81px;left:435.4px;">No.</span>
<span class="t" id="t56" style="font:12px/16px 'Liberation Sans',sans-serif;color:#000;top:78.1px;letter-spacing:0.05px;left:475.6px;">2Theta [°]</span>
<span class="t" id="t57" style="font:12px/16px 'Liberation Sans',sans-serif;color:#000;top:78.1px;left:539.7px;">d-spacing ...</span>
<span class="t" id="t58" style="font:12px/16px 'Liberation Sans',sans-serif;color:#000;top:78.1px;letter-spacing:0.55px;left:669.7px;">Int.</span>
<span class="t" id="t59" style="font:12px/16px 'Liberation Sans',sans-serif;color:#000;top:78.1px;right:196.6px;">F</span>
<span class="t" id="t60" style="font:12px/16px 'Liberation Sans',sans-serif;color:#000;top:78.1px;left:779.7px;">h</span>
<span class="t" id="t61" style="font:12px/16px 'Liberation Sans',sans-serif;color:#000;top:78.1px;left:803.3px;">k</span>
<span class="t" id="t62" style="font:12px/16px 'Liberation Sans',sans-serif;color:#000;top:78.1px;left:828.5px;">l</span>
<span class="t" id="t63" style="font:12px/16px 'Liberation Sans',sans-serif;color:#000;top:78.1px;letter-spacing:0.64px;left:851.8px;">Mult.</span>
<span class="t" id="t64" style="font:11px/16px 'Liberation Sans',sans-serif;color:#000;top:98.1px;letter-spacing:-0.15px;left:435.4px;">1</span>
<span class="t" id="t65" style="font:11px/16px 'Liberation Sans',sans-serif;color:#000;top:98.1px;letter-spacing:-0.15px;right:437.7px;">14.628</span>
<span class="t" id="t66" style="font:11px/16px 'Liberation Sans',sans-serif;color:#000;top:98.1px;letter-spacing:-0.15px;right:357.4px;">6.0506</span>
<span class="t" id="t67" style="font:11px/16px 'Liberation Sans',sans-serif;color:#000;top:98.1px;letter-spacing:-0.15px;right:277.8px;">599306.94</span>
<span class="t" id="t68" style="font:11px/16px 'Liberation Sans',sans-serif;color:#000;top:98.1px;letter-spacing:-0.15px;right:197.3px;">70.54</span>
<span class="t" id="t69" style="font:11px/16px 'Liberation Sans',sans-serif;color:#000;top:98.1px;letter-spacing:-0.15px;left:779.8px;">0</span>
<span class="t" id="t70" style="font:11px/16px 'Liberation Sans',sans-serif;color:#000;top:98.1px;letter-spacing:-0.15px;left:803.8px;">0</span>
<span class="t" id="t71" style="font:11px/16px 'Liberation Sans',sans-serif;color:#000;top:98.1px;letter-spacing:-0.15px;left:827.0px;">1</span>
<span class="t" id="t72" style="font:11px/16px 'Liberation Sans',sans-serif;color:#000;top:98.1px;letter-spacing:-0.15px;left:851.6px;">2</span>
<span class="t" id="t73" style="font:11px/16px 'Liberation Sans',sans-serif;color:#000;top:117.1px;letter-spacing:-0.15px;left:435.8px;">2</span>
<span class="t" id="t74" style="font:11px/16px 'Liberation Sans',sans-serif;color:#000;top:117.1px;letter-spacing:-0.15px;right:437.8px;">15.285</span>
<span class="t" id="t75" style="font:11px/16px 'Liberation Sans',sans-serif;color:#000;top:117.1px;letter-spacing:-0.15px;right:357.2px;">5.7922</span>
<span class="t" id="t76" style="font:11px/16px 'Liberation Sans',sans-serif;color:#000;top:117.1px;letter-spacing:-0.15px;right:277.7px;">261240.55</span>
<span class="t" id="t77" style="font:11px/16px 'Liberation Sans',sans-serif;color:#000;top:117.1px;letter-spacing:-0.15px;right:197.6px;">48.70</span>
<span class="t" id="t78" style="font:11px/16px 'Liberation Sans',sans-serif;color:#000;top:117.1px;letter-spacing:-0.15px;left:779.6px;">2</span>
<span class="t" id="t79" style="font:11px/16px 'Liberation Sans',sans-serif;color:#000;top:117.1px;letter-spacing:-0.15px;left:803.8px;">0</span>
<span class="t" id="t80" style="font:11px/16px 'Liberation Sans',sans-serif;color:#000;top:117.1px;letter-spacing:-0.15px;left:827.8px;">0</span>
<span class="t" id="t81" style="font:11px/16px 'Liberation Sans',sans-serif;color:#000;top:117.1px;letter-spacing:-0.15px;left:851.6px;">2</span>
<span class="t" id="t82" style="font:11px/16px 'Liberation Sans',sans-serif;color:#000;top:136.1px;letter-spacing:-0.15px;left:435.8px;">3</span>
<span class="t" id="t83" style="font:11px/16px 'Liberation Sans',sans-serif;color:#000;top:136.1px;letter-spacing:-0.15px;right:437.3px;">17.699</span>
<span class="t" id="t84" style="font:11px/16px 'Liberation Sans',sans-serif;color:#000;top:136.1px;letter-spacing:-0.15px;right:357.2px;">5.0072</span>
<span class="t" id="t85" style="font:11px/16px 'Liberation Sans',sans-serif;color:#000;top:136.1px;letter-spacing:-0.15px;right:277.3px;">105203.87</span>
<span class="t" id="t86" style="font:11px/16px 'Liberation Sans',sans-serif;color:#000;top:136.1px;letter-spacing:-0.15px;right:197.2px;">35.91</span>
<span class="t" id="t87" style="font:11px/16px 'Liberation Sans',sans-serif;color:#000;top:136.1px;letter-spacing:-0.15px;left:779.6px;">-2</span>
<span class="t" id="t88" style="font:11px/16px 'Liberation Sans',sans-serif;color:#000;top:136.1px;letter-spacing:-0.15px;left:803.8px;">0</span>
<span class="t" id="t89" style="font:11px/16px 'Liberation Sans',sans-serif;color:#000;top:136.1px;letter-spacing:-0.15px;left:827.0px;">1</span>
<span class="t" id="t90" style="font:11px/16px 'Liberation Sans',sans-serif;color:#000;top:136.1px;letter-spacing:-0.15px;left:851.6px;">2</span>
<span class="t" id="t91" style="font:11px/16px 'Liberation Sans',sans-serif;color:#000;top:155.1px;letter-spacing:-0.15px;left:436.0px;">4</span>
<span class="t" id="t92" style="font:11px/16px 'Liberation Sans',sans-serif;color:#000;top:155.1px;letter-spacing:-0.15px;right:437.4px;">24.251</span>
<span class="t" id="t93" style="font:11px/16px 'Liberation Sans',sans-serif;color:#000;top:155.1px;letter-spacing:-0.15px;right:357.5px;">3.6672</span>
<span class="t" id="t94" style="font:11px/16px 'Liberation Sans',sans-serif;color:#000;top:155.1px;letter-spacing:-0.15px;right:277.7px;">9454.45</span>
<span class="t" id="t95" style="font:11px/16px 'Liberation Sans',sans-serif;color:#000;top:155.1px;letter-spacing:-0.15px;right:197.3px;">14.92</span>
<span class="t" id="t96" style="font:11px/16px 'Liberation Sans',sans-serif;color:#000;top:155.1px;letter-spacing:-0.15px;left:779.6px;">2</span>
<span class="t" id="t97" style="font:11px/16px 'Liberation Sans',sans-serif;color:#000;top:155.1px;letter-spacing:-0.15px;left:803.8px;">0</span>
<span class="t" id="t98" style="font:11px/16px 'Liberation Sans',sans-serif;color:#000;top:155.1px;letter-spacing:-0.15px;left:827.0px;">1</span>
<span class="t" id="t99" style="font:11px/16px 'Liberation Sans',sans-serif;color:#000;top:155.1px;letter-spacing:-0.15px;left:851.6px;">2</span>
<span class="t" id="t100" style="font:11px/16px 'Liberation Sans',sans-serif;color:#000;top:174.1px;letter-spacing:-0.15px;left:435.8px;">5</span>
<span class="t" id="t101" style="font:11px/16px 'Liberation Sans',sans-serif;color:#000;top:174.1px;letter-spacing:-0.15px;right:437.7px;">25.123</span>
<span class="t" id="t102" style="font:11px/16px 'Liberation Sans',sans-serif;color:#000;top:174.1px;letter-spacing:-0.15px;right:357.5px;">3.5418</span>
<span class="t" id="t103" style="font:11px/16px 'Liberation Sans',sans-serif;color:#000;top:174.1px;letter-spacing:-0.15px;right:277.5px;">801063.81</span>
<span class="t" id="t104" style="font:11px/16px 'Liberation Sans',sans-serif;color:#000;top:174.1px;letter-spacing:-0.15px;right:197.2px;">100.81</span>
<span class="t" id="t105" style="font:11px/16px 'Liberation Sans',sans-serif;color:#000;top:174.1px;letter-spacing:-0.15px;left:779.6px;">-1</span>
<span class="t" id="t106" style="font:11px/16px 'Liberation Sans',sans-serif;color:#000;top:174.1px;letter-spacing:-0.15px;left:803.0px;">1</span>
<span class="t" id="t107" style="font:11px/16px 'Liberation Sans',sans-serif;color:#000;top:174.1px;letter-spacing:-0.15px;left:827.8px;">0</span>
<span class="t" id="t108" style="font:11px/16px 'Liberation Sans',sans-serif;color:#000;top:174.1px;letter-spacing:-0.15px;left:851.8px;">4</span>
<span class="t" id="t109" style="font:11px/16px 'Liberation Sans',sans-serif;color:#000;top:193.1px;letter-spacing:-0.15px;left:435.9px;">6</span>
<span class="t" id="t110" style="font:11px/16px 'Liberation Sans',sans-serif;color:#000;top:193.1px;letter-spacing:-0.15px;right:437.4px;">27.968</span>
<span class="t" id="t111" style="font:11px/16px 'Liberation Sans',sans-serif;color:#000;top:193.1px;letter-spacing:-0.15px;right:357.4px;">3.1876</span>
<span class="t" id="t112" style="font:11px/16px 'Liberation Sans',sans-serif;color:#000;top:193.1px;letter-spacing:-0.15px;right:277.4px;">14039.01</span>
<span class="t" id="t113" style="font:11px/16px 'Liberation Sans',sans-serif;color:#000;top:193.1px;letter-spacing:-0.15px;right:197.5px;">14.95</span>
<span class="t" id="t114" style="font:11px/16px 'Liberation Sans',sans-serif;color:#000;top:193.1px;letter-spacing:-0.15px;left:779.6px;">-1</span>
<span class="t" id="t115" style="font:11px/16px 'Liberation Sans',sans-serif;color:#000;top:193.1px;letter-spacing:-0.15px;left:803.6px;">-1</span>
<span class="t" id="t116" style="font:11px/16px 'Liberation Sans',sans-serif;color:#000;top:193.1px;letter-spacing:-0.15px;left:827.0px;">1</span>
<span class="t" id="t117" style="font:11px/16px 'Liberation Sans',sans-serif;color:#000;top:193.1px;letter-spacing:-0.15px;left:851.8px;">4</span>
<span class="t" id="t118" style="font:11px/16px 'Liberation Sans',sans-serif;color:#000;top:212.1px;letter-spacing:-0.15px;left:435.8px;">7</span>
<span class="t" id="t119" style="font:11px/16px 'Liberation Sans',sans-serif;color:#000;top:212.1px;letter-spacing:-0.15px;right:437.5px;">28.851</span>
<span class="t" id="t120" style="font:11px/16px 'Liberation Sans',sans-serif;color:#000;top:212.1px;letter-spacing:-0.15px;right:357.5px;">3.0920</span>
<span class="t" id="t121" style="font:11px/16px 'Liberation Sans',sans-serif;color:#000;top:212.1px;letter-spacing:-0.15px;right:277.7px;">172814.13</span>
<span class="t" id="t122" style="font:11px/16px 'Liberation Sans',sans-serif;color:#000;top:212.1px;letter-spacing:-0.15px;right:197.1px;">76.67</span>
<span class="t" id="t123" style="font:11px/16px 'Liberation Sans',sans-serif;color:#000;top:212.1px;letter-spacing:-0.15px;left:779.6px;">-2</span>
<span class="t" id="t124" style="font:11px/16px 'Liberation Sans',sans-serif;color:#000;top:212.1px;letter-spacing:-0.15px;left:803.8px;">0</span>
<span class="t" id="t125" style="font:11px/16px 'Liberation Sans',sans-serif;color:#000;top:212.1px;letter-spacing:-0.15px;left:827.6px;">2</span>
<span class="t" id="t126" style="font:11px/16px 'Liberation Sans',sans-serif;color:#000;top:212.1px;letter-spacing:-0.15px;left:851.6px;">2</span>
<span class="t" id="t127" style="font:11px/16px 'Liberation Sans',sans-serif;color:#000;top:231.1px;letter-spacing:-0.15px;left:435.9px;">8</span>
<span class="t" id="t128" style="font:11px/16px 'Liberation Sans',sans-serif;color:#000;top:231.1px;letter-spacing:-0.15px;right:437.6px;">29.502</span>
<span class="t" id="t129" style="font:11px/16px 'Liberation Sans',sans-serif;color:#000;top:231.1px;letter-spacing:-0.15px;right:357.4px;">3.0253</span>
<span class="t" id="t130" style="font:11px/16px 'Liberation Sans',sans-serif;color:#000;top:231.1px;letter-spacing:-0.15px;right:277.7px;">382311.53</span>
<span class="t" id="t131" style="font:11px/16px 'Liberation Sans',sans-serif;color:#000;top:231.1px;letter-spacing:-0.15px;right:197.5px;">116.78</span>
<span class="t" id="t132" style="font:11px/16px 'Liberation Sans',sans-serif;color:#000;top:231.1px;letter-spacing:-0.15px;left:779.8px;">0</span>
<span class="t" id="t133" style="font:11px/16px 'Liberation Sans',sans-serif;color:#000;top:231.1px;letter-spacing:-0.15px;left:803.8px;">0</span>
<span class="t" id="t134" style="font:11px/16px 'Liberation Sans',sans-serif;color:#000;top:231.1px;letter-spacing:-0.15px;left:827.6px;">2</span>
<span class="t" id="t135" style="font:11px/16px 'Liberation Sans',sans-serif;color:#000;top:231.1px;letter-spacing:-0.15px;left:851.6px;">2</span>
<span class="t" id="t136" style="font:11px/16px 'Liberation Sans',sans-serif;color:#000;top:250.1px;letter-spacing:-0.15px;left:435.9px;">9</span>
<span class="t" id="t137" style="font:11px/16px 'Liberation Sans',sans-serif;color:#000;top:250.1px;letter-spacing:-0.15px;right:437.4px;">29.887</span>
<span class="t" id="t138" style="font:11px/16px 'Liberation Sans',sans-serif;color:#000;top:250.1px;letter-spacing:-0.15px;right:357.2px;">2.9872</span>
<span class="t" id="t139" style="font:11px/16px 'Liberation Sans',sans-serif;color:#000;top:250.1px;letter-spacing:-0.15px;right:277.7px;">341046.19</span>
<span class="t" id="t140" style="font:11px/16px 'Liberation Sans',sans-serif;color:#000;top:250.1px;letter-spacing:-0.15px;right:197.3px;">111.84</span>
<span class="t" id="t141" style="font:11px/16px 'Liberation Sans',sans-serif;color:#000;top:250.1px;letter-spacing:-0.15px;left:779.6px;">-4</span>
<span class="t" id="t142" style="font:11px/16px 'Liberation Sans',sans-serif;color:#000;top:250.1px;letter-spacing:-0.15px;left:803.8px;">0</span>
<span class="t" id="t143" style="font:11px/16px 'Liberation Sans',sans-serif;color:#000;top:250.1px;letter-spacing:-0.15px;left:827.0px;">1</span>
<span class="t" id="t144" style="font:11px/16px 'Liberation Sans',sans-serif;color:#000;top:250.1px;letter-spacing:-0.15px;left:851.6px;">2</span>
<span class="t" id="t145" style="font:11px/16px 'Liberation Sans',sans-serif;color:#000;top:269.1px;letter-spacing:-0.15px;left:435.4px;">10</span>
<span class="t" id="t146" style="font:11px/16px 'Liberation Sans',sans-serif;color:#000;top:269.1px;letter-spacing:-0.15px;right:437.7px;">30.373</span>
<span class="t" id="t147" style="font:11px/16px 'Liberation Sans',sans-serif;color:#000;top:269.1px;letter-spacing:-0.15px;right:357.3px;">2.9405</span>
<span class="t" id="t148" style="font:11px/16px 'Liberation Sans',sans-serif;color:#000;top:269.1px;letter-spacing:-0.15px;right:277.7px;">151118.16</span>
<span class="t" id="t149" style="font:11px/16px 'Liberation Sans',sans-serif;color:#000;top:269.1px;letter-spacing:-0.15px;right:197.5px;">53.56</span>
<span class="t" id="t150" style="font:11px/16px 'Liberation Sans',sans-serif;color:#000;top:269.1px;letter-spacing:-0.15px;left:779.0px;">1</span>
<span class="t" id="t151" style="font:11px/16px 'Liberation Sans',sans-serif;color:#000;top:269.1px;letter-spacing:-0.15px;left:803.6px;">-1</span>
<span class="t" id="t152" style="font:11px/16px 'Liberation Sans',sans-serif;color:#000;top:269.1px;letter-spacing:-0.15px;left:827.0px;">1</span>
<span class="t" id="t153" style="font:11px/16px 'Liberation Sans',sans-serif;color:#000;top:269.1px;letter-spacing:-0.15px;left:851.8px;">4</span>
</body></html>
